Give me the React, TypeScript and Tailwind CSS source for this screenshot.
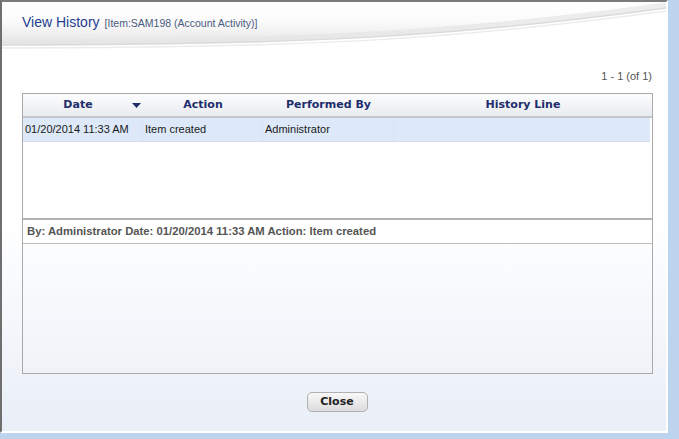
import React from "react"

const rows = [
  { date: "01/20/2014 11:33 AM", action: "Item created", by: "Administrator", line: "" },
]

function HeaderSwoosh() {
  return (
    <svg
      className="absolute inset-0 pointer-events-none"
      width="664"
      height="52"
      viewBox="0 0 664 52"
      fill="none"
    >
      <defs>
        <linearGradient id="hdr" x1="0" y1="0" x2="0" y2="1">
          <stop offset="0" stopColor="#ffffff" />
          <stop offset="0.45" stopColor="#fbfbfb" />
          <stop offset="1" stopColor="#e4e4e4" />
        </linearGradient>
      </defs>
      <path d="M0,0 H664 V6 C450,35 300,43 0,43 Z" fill="url(#hdr)" />
      <path d="M0,40 C300,40 450,32 664,3" stroke="#e6e6e6" strokeWidth="5" opacity="0.7" />
      <path d="M0,43 C300,43 450,35 664,6" stroke="#dadada" strokeWidth="1.5" />
      <path d="M0,46 C300,46 450,38 664,9" stroke="#ececec" strokeWidth="1.5" />
    </svg>
  )
}

export default function App() {
  return (
    <div className="w-[679px] h-[439px] bg-[#bcd4ee] overflow-hidden">
      <div className="w-[668px] h-[433px] flex flex-col border-l-2 border-t-2 border-l-[#6f6f6f] border-t-[#7a7a7a] border-r-2 border-r-white border-b-2 border-b-white bg-gradient-to-b from-white from-50% to-[#e9eff7]">
        {/* Title bar */}
        <div className="relative h-[50px] shrink-0">
          <HeaderSwoosh />
          <div className="relative flex items-baseline gap-[5px] pl-[20px] pt-[10px]">
            <span className="text-[14px] text-[#233e8e] [font-family:'Liberation_Sans',Arial,sans-serif]">
              View History
            </span>
            <span className="text-[10.5px] text-[#4a5b80] [font-family:'Liberation_Sans',Arial,sans-serif]">
              [Item:SAM198 (Account Activity)]
            </span>
          </div>
        </div>

        {/* Pager */}
        <div className="flex justify-end pr-[14px] pt-[16px] h-[41px] text-[11px] text-[#555] [font-family:'Liberation_Sans',Arial,sans-serif]">
          1 - 1 (of 1)
        </div>

        {/* Grid */}
        <div className="ml-[20px] w-[631px] h-[281px] border border-[#a9a9a9] flex flex-col [font-family:'Liberation_Sans',Arial,sans-serif]">
          <div className="h-[124px] flex flex-col bg-white">
            <div className="flex h-[24px] bg-gradient-to-b from-[#fbfcfd] to-[#e9ecf0] border-b-2 border-[#c3c7cc] text-[11px] font-bold text-[#1e2d6b] [font-family:'DejaVu_Sans',Verdana,sans-serif]">
              <div className="relative w-[120px] flex items-center justify-center pr-[10px]">
                Date
                <svg className="absolute right-[2px] top-[9px]" width="9" height="5" viewBox="0 0 9 5">
                  <path d="M0,0 H9 L4.5,5 Z" fill="#1e2d6b" />
                </svg>
              </div>
              <div className="w-[120px] flex items-center justify-center">Action</div>
              <div className="w-[131px] flex items-center justify-center">Performed By</div>
              <div className="flex-1 flex items-center justify-center">History Line</div>
            </div>
            {rows.map((r, i) => (
              <div
                key={i}
                className="flex h-[24px] mr-[2px] bg-[#dde9f8] border-b border-[#d4dce6] text-[11px] text-[#1a1a1a]"
              >
                <div className="w-[120px] flex items-center pl-[2px] border-r border-dotted border-[#d6dde6]">
                  {r.date}
                </div>
                <div className="w-[120px] flex items-center pl-[2px] border-r border-dotted border-[#d6dde6]">
                  {r.action}
                </div>
                <div className="w-[131px] flex items-center pl-[2px] border-r border-dotted border-[#d6dde6]">
                  {r.by}
                </div>
                <div className="flex-1 flex items-center pl-[2px]">{r.line}</div>
              </div>
            ))}
          </div>

          {/* Detail */}
          <div className="h-[26px] flex items-center pl-[4px] border-t-2 border-b border-t-[#b2b2b2] border-b-[#bdbdbd] bg-white text-[11.3px] font-bold text-[#555]">
            By: Administrator Date: 01/20/2014 11:33 AM Action: Item created
          </div>
          <div className="flex-1" />
        </div>

        {/* Footer */}
        <div className="flex justify-center pt-[18px]">
          <button className="w-[61px] h-[20px] rounded-[5px] border border-[#b0b0b0] bg-gradient-to-b from-[#f8f8f8] to-[#dcdcdc] text-[11px] font-bold text-[#222] [font-family:'DejaVu_Sans',Verdana,sans-serif] ml-[6px]">
            Close
          </button>
        </div>
      </div>
    </div>
  )
}
